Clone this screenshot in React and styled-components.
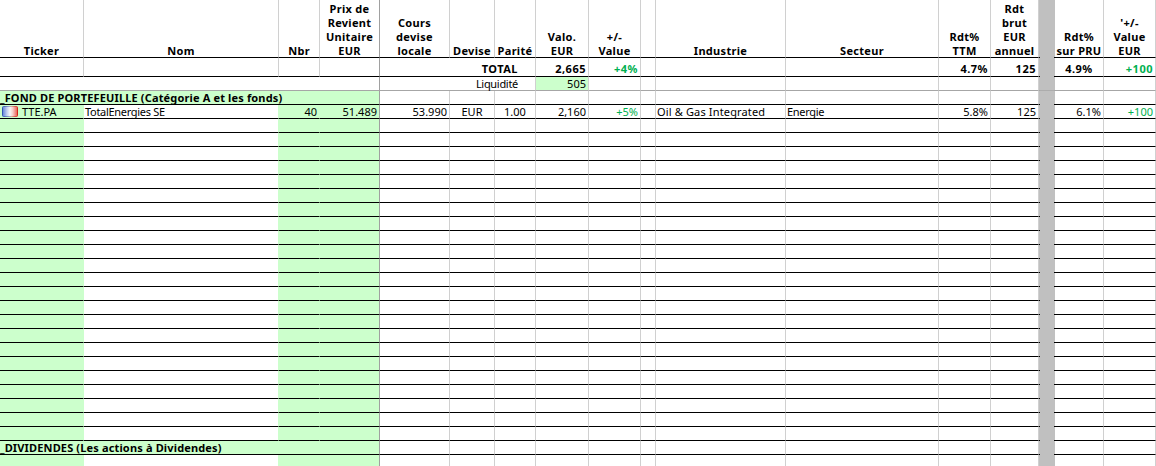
import React from "react";
import styled, { createGlobalStyle } from "styled-components";

const GlobalStyle = createGlobalStyle`
  html, body {
    margin: 0;
    padding: 0;
    background: #fff;
  }
  body {
    width: 1156px;
    height: 466px;
    overflow: hidden;
    font-family: "Noto Sans", "DejaVu Sans", sans-serif;
    font-size: 11px;
    color: #000;
  }
`;

// column widths, the last pixel of each one is its grid line
const COLS = "84px 195px 41px 60px 70px 45px 41px 53px 52px 15px 130px 153px 52px 48px 16px 49px 52px";
const GREEN = "#ccffcc";
const GRID = "#d0d0d0";
const EDGE = "#a0a0a0";
const SOFT_LINE = "#a6a6a6";
const GAIN = "#00b050";

const Sheet = styled.div`
  width: 1156px;
  height: 466px;
  overflow: hidden;
`;

const Row = styled.div`
  display: grid;
  grid-template-columns: ${COLS};
  grid-template-rows: ${(p) => p.$h}px;
`;

const Cell = styled.div`
  box-sizing: border-box;
  min-width: 0;
  display: flex;
  align-items: flex-start;
  justify-content: flex-end;
  white-space: nowrap;
  padding: 0 2px;
  line-height: 14px;
  font-weight: ${(p) => (p.$bold ? 700 : 400)};
  letter-spacing: ${(p) => (p.$bold ? "0.5px" : "0")};
  color: ${(p) => (p.$gain ? GAIN : "#000")};
  background: ${(p) => (p.$green ? GREEN : "#fff")};
  border-right: 1px solid ${(p) => p.$right || GRID};
  border-bottom: 1px solid ${(p) => p.$line || "#000"};
  ${(p) => p.$center && "justify-content: center;"}
  ${(p) => p.$span && `grid-column: span ${p.$span};`}
`;

const TextCell = styled(Cell)`
  justify-content: flex-start;
  padding: 0 0 0 1px;
  letter-spacing: -0.3px;
`;

const IndustryCell = styled(TextCell)`
  letter-spacing: 0.15px;
`;

const HeadCell = styled(Cell)`
  align-items: flex-end;
  justify-content: center;
  padding: 0;
  text-align: center;
  letter-spacing: 0.3px;
`;

const HeadText = styled.div`
  margin-bottom: -1px;
`;

// the total row sits low in its taller row
const TotalCell = styled(Cell)`
  padding-top: 4px;
`;

const TotalLabel = styled(TotalCell)`
  padding-right: 17px;
`;

const LiquidityLabel = styled(Cell)`
  padding-right: 17px;
  letter-spacing: -0.3px;
`;

const SectionCell = styled(Cell)`
  justify-content: flex-start;
  padding: 0;
  letter-spacing: 0.15px;
`;

const GutterCell = styled.div`
  background:
    linear-gradient(${(p) => p.$line || "#000"}, ${(p) => p.$line || "#000"}) left bottom / 1px 1px no-repeat,
    linear-gradient(${(p) => p.$line || "#000"}, ${(p) => p.$line || "#000"}) right bottom / 1px 1px no-repeat,
    linear-gradient(${(p) => (p.$line ? "#acacac" : "#c0c0c0")}, ${(p) => (p.$line ? "#acacac" : "#c0c0c0")}) left bottom / 100% 1px no-repeat,
    #c0c0c0;
`;

const Flag = styled.svg`
  flex: none;
  width: 16px;
  height: 11px;
  margin: 1px 4px 0 0;
`;

const TickerCell = styled(Cell)`
  justify-content: flex-start;
`;

const FranceFlag = () => (
  <Flag viewBox="0 0 16 11">
    <defs>
      <linearGradient id="fill" x1="0" x2="1" y1="0" y2="0">
        <stop offset="0" stopColor="#5f80d8" />
        <stop offset="0.3" stopColor="#c3d0f0" />
        <stop offset="0.5" stopColor="#f8f8f8" />
        <stop offset="0.68" stopColor="#f6cfcb" />
        <stop offset="1" stopColor="#ec5a4e" />
      </linearGradient>
      <linearGradient id="rim" x1="0" x2="1" y1="0" y2="0">
        <stop offset="0" stopColor="#3358b4" />
        <stop offset="0.45" stopColor="#9aa8cc" />
        <stop offset="0.6" stopColor="#dca09a" />
        <stop offset="1" stopColor="#d32a1c" />
      </linearGradient>
    </defs>
    <rect x="0.5" y="0.5" width="15" height="10" rx="1" fill="url(#fill)" stroke="url(#rim)" />
  </Flag>
);

const HEADERS = [
  ["Ticker"],
  ["Nom"],
  ["Nbr"],
  ["Prix de", "Revient", "Unitaire", "EUR"],
  ["Cours", "devise", "locale"],
  ["Devise"],
  ["Parité"],
  ["Valo.", "EUR"],
  ["+/-", "Value"],
  [],
  ["Industrie"],
  ["Secteur"],
  ["Rdt%", "TTM"],
  ["Rdt", "brut", "EUR", "annuel"],
  null,
  ["Rdt%", "sur PRU"],
  ["'+/-", "Value", "EUR"],
];

const HeaderRow = () => (
  <Row $h={58}>
    {HEADERS.map((lines, i) =>
      lines === null ? (
        <GutterCell key={i} />
      ) : (
        <HeadCell key={i} $bold $right={i === 3 ? EDGE : GRID}>
          <HeadText>
            {lines.map((l) => (
              <div key={l}>{l}</div>
            ))}
          </HeadText>
        </HeadCell>
      )
    )}
  </Row>
);

const TotalRow = () => (
  <Row $h={19}>
    <Cell />
    <Cell />
    <Cell />
    <Cell $right={EDGE} />
    <TotalLabel $span={3} $bold>
      TOTAL
    </TotalLabel>
    <TotalCell $bold>2,665</TotalCell>
    <TotalCell $bold $gain>
      +4%
    </TotalCell>
    <Cell />
    <Cell />
    <Cell />
    <TotalCell $bold>4.7%</TotalCell>
    <TotalCell $bold>125</TotalCell>
    <GutterCell />
    <TotalCell $bold $center>
      4.9%
    </TotalCell>
    <TotalCell $bold $gain>
      +100
    </TotalCell>
  </Row>
);

const LiquidityRow = () => (
  <Row $h={14}>
    <Cell $span={4} $line={SOFT_LINE} $right={EDGE} />
    <LiquidityLabel $span={3} $line={SOFT_LINE}>
      Liquidité
    </LiquidityLabel>
    <Cell $line={SOFT_LINE} $green>
      505
    </Cell>
    <Cell $line={SOFT_LINE} />
    <Cell $line={SOFT_LINE} />
    <Cell $line={SOFT_LINE} />
    <Cell $line={SOFT_LINE} />
    <Cell $line={SOFT_LINE} />
    <Cell $line={SOFT_LINE} />
    <GutterCell $line={SOFT_LINE} />
    <Cell $line={SOFT_LINE} />
    <Cell $line={SOFT_LINE} />
  </Row>
);

const Trailing = () => (
  <>
    <Cell />
    <Cell />
    <Cell />
    <Cell />
    <Cell />
    <Cell />
    <Cell />
    <Cell />
    <Cell />
    <Cell />
    <GutterCell />
    <Cell />
    <Cell />
  </>
);

const SectionRow = ({ label }) => (
  <Row $h={14}>
    <SectionCell $span={4} $green $bold $right={EDGE}>
      {label}
    </SectionCell>
    <Trailing />
  </Row>
);

const EmptyRow = () => (
  <Row $h={14}>
    <Cell $green $right={GREEN} />
    <Cell $right={GREEN} />
    <Cell $green $right={GREEN} />
    <Cell $green $right={EDGE} />
    <Trailing />
  </Row>
);

const PositionRow = () => (
  <Row $h={14}>
    <TickerCell $green $right={GREEN}>
      <FranceFlag />
      TTE.PA
    </TickerCell>
    <TextCell $right={GREEN}>TotalEnergies SE</TextCell>
    <Cell $green $right={GREEN}>
      40
    </Cell>
    <Cell $green $right={EDGE}>
      51.489
    </Cell>
    <Cell>53.990</Cell>
    <Cell $center>EUR</Cell>
    <Cell $center>1.00</Cell>
    <Cell>2,160</Cell>
    <Cell $gain>+5%</Cell>
    <Cell />
    <IndustryCell>Oil &amp; Gas Integrated</IndustryCell>
    <TextCell>Energie</TextCell>
    <Cell>5.8%</Cell>
    <Cell>125</Cell>
    <GutterCell />
    <Cell>6.1%</Cell>
    <Cell $gain>+100</Cell>
  </Row>
);

export default function App() {
  return (
    <Sheet>
      <GlobalStyle />
      <HeaderRow />
      <TotalRow />
      <LiquidityRow />
      <SectionRow label="_FOND DE PORTEFEUILLE (Catégorie A et les fonds)" />
      <PositionRow />
      {Array.from({ length: 23 }, (_, i) => (
        <EmptyRow key={i} />
      ))}
      <SectionRow label="_DIVIDENDES (Les actions à Dividendes)" />
      <EmptyRow />
    </Sheet>
  );
}
